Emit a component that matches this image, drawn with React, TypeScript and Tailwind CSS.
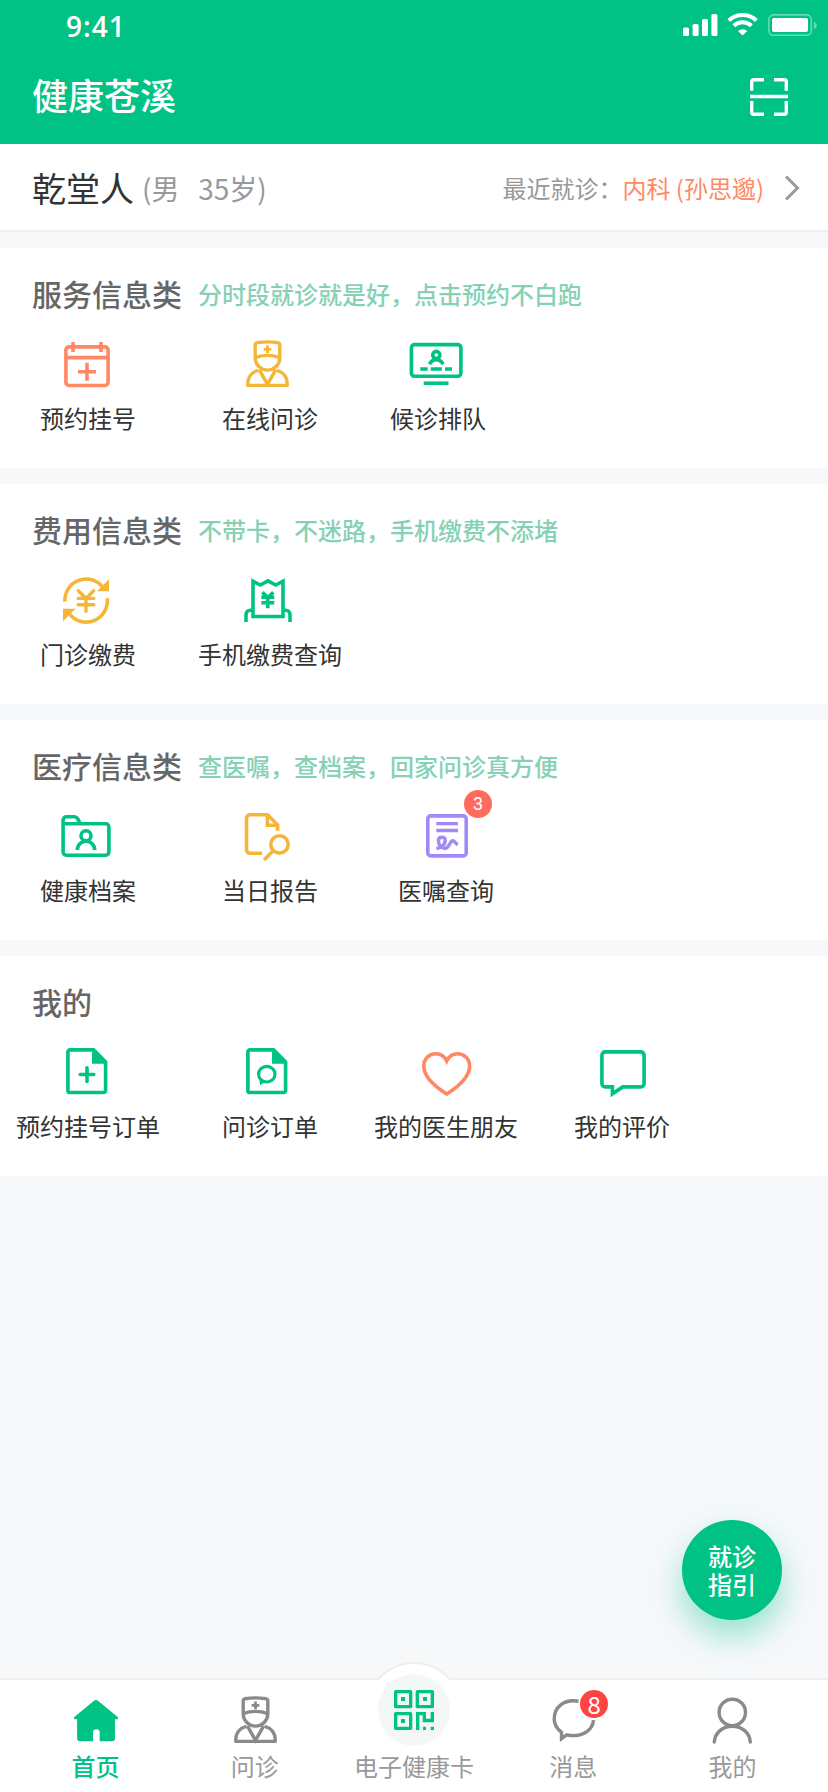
import type { ReactNode } from "react";

type IconProps = { className?: string };

type MenuItem = {
  label: string;
  icon: ReactNode;
  width: string;
  badge?: number;
};

type MenuSection = {
  title: string;
  hint?: string;
  items: MenuItem[];
};

function Icon({ className = "", width = 3.6, children }: IconProps & { width?: number; children: ReactNode }) {
  return (
    <svg
      viewBox="0 0 64 64"
      className={`w-16 h-16 shrink-0 ${className}`}
      fill="none"
      stroke="currentColor"
      strokeWidth={width}
    >
      {children}
    </svg>
  );
}

function CalendarIcon() {
  return (
    <Icon className="text-[#ff8864]">
      <rect x="9.9" y="13.9" width="42.2" height="38.6" rx="3.2" />
      <path d="M10 24.6h42M17 9v10M45 9v10M31 29.8v18M22 38.7h18" />
    </Icon>
  );
}

function DoctorIcon({ className = "" }: IconProps) {
  return (
    <Icon className={className} width={3.4}>
      <path d="M17.2 24.8V11.6q0-1.4 1.6-1.8 10.7-1.8 21.4 0 1.6.4 1.6 1.8v13.2a12.3 12.3 0 0 1-24.6 0Z" />
      <path d="M17.2 24.6q12.3-4.4 24.6 0" />
      <path d="M20.3 37.4C14 39 9.8 44 9.8 51v1.4h39.4V51c0-7-4.2-12-10.5-13.6" strokeLinejoin="round" />
      <path d="M21.3 36.8l8.2 14.6 8.2-14.6" />
      <path d="M29.5 12.6v7.6M25.7 16.4h7.6" strokeWidth="2.8" />
    </Icon>
  );
}

function QueueIcon() {
  return (
    <Icon className="text-[#00c285]">
      <rect x="5.4" y="11.6" width="49.5" height="31.7" rx="3.2" />
      <path d="M17.7 50.2h24.8" />
      <circle cx="30.3" cy="22" r="3.6" />
      <path d="M23.5 31.2c1.4-3 3.9-4.6 6.8-4.6s5.4 1.6 6.8 4.6M14.3 36h7.4M24.8 36h11M39 36h7" />
    </Icon>
  );
}

function PayIcon() {
  return (
    <Icon className="text-[#f5b638]">
      <path d="M8.9 32.7A21.2 21.2 0 0 1 46 17.3M51.2 29.3A21.2 21.2 0 0 1 14 45.6" />
      <path d="M53 10.3v12H41ZM7 39.7h12.7L7 52.3Z" fill="currentColor" stroke="none" />
      <path d="M22.3 21.8l7.7 7.6 7.7-7.6M30 29v13.3M22.2 29.4h15.6M22.2 35.7h15.6" strokeWidth="3.4" strokeLinecap="round" />
    </Icon>
  );
}

function ReceiptIcon() {
  return (
    <Icon className="text-[#00c285]">
      <path d="M15 47.5V12.2l7.3 3.8L30 11.8l7.7 4.2 7.3-3.8v35.3Z" />
      <path d="M15 41.2h-2.8a4.2 4.2 0 0 0-4.2 4.2V53M45 41.2h2.8a4.2 4.2 0 0 1 4.2 4.2V53" />
      <path d="M24.3 23.2l5.5 5.3 5.5-5.3M29.8 28v11.3M23.3 28.3h13M23.3 33.8h13" />
    </Icon>
  );
}

function FolderIcon() {
  return (
    <Icon className="text-[#00c285]">
      <path d="M7.1 19V15a3.3 3.3 0 0 1 3.3-3.3h8q2 0 3.1 1.8l3 5.3h25.2a3.2 3.2 0 0 1 3.2 3.2v25a3.2 3.2 0 0 1-3.2 3.2H10.3A3.2 3.2 0 0 1 7.1 47ZM7.1 18.8h18" />
      <circle cx="30" cy="30.7" r="5" />
      <path d="M21.3 45c0-5 3.8-8.8 8.7-8.8s8.7 3.8 8.7 8.8" />
    </Icon>
  );
}

function ReportIcon() {
  return (
    <Icon className="text-[#f5b638]">
      <path d="M24 48.2H12a3.5 3.5 0 0 1-3.5-3.5V13.2A3.5 3.5 0 0 1 12 9.7h17.6l10 10.2v5.8" />
      <path d="M29.4 10v10.3H40" />
      <circle cx="41.5" cy="39.4" r="8.7" />
      <path d="M35.5 45.5L26 55" />
    </Icon>
  );
}

function PrescriptionIcon() {
  return (
    <Icon className="text-[#a388f8]">
      <rect x="13.8" y="10.9" width="38.4" height="40" rx="2.8" />
      <path d="M22.3 18.6H44M22.3 25.5H44" strokeWidth="3.4" />
      <path d="M22.4 43.6c5.6-1.2 8.8-4.6 8.8-8.4 0-4-6.6-4-6.8.2-.2 4.2 3 8 6.6 8 4.6 0 4.6-7.6 7.8-7.6 1.6 0 2.4 2.4 4.9 4" strokeWidth="3.5" />
    </Icon>
  );
}

function OrderPlusIcon() {
  return (
    <Icon className="text-[#00c285]">
      <path d="M14 8.9h23.6l12 12V49.4a2.1 2.1 0 0 1-2.1 2.1H14a2.1 2.1 0 0 1-2.1-2.1V11A2.1 2.1 0 0 1 14 8.9Z" />
      <path d="M36 9v13.7h14Z" fill="currentColor" stroke="none" />
      <path d="M31 26.8v13.6M24.2 33.5h13.6" strokeLinecap="round" />
    </Icon>
  );
}

function OrderChatIcon() {
  return (
    <Icon className="text-[#00c285]">
      <path d="M12 8.9h23.6l12 12V49.4a2.1 2.1 0 0 1-2.1 2.1H12a2.1 2.1 0 0 1-2.1-2.1V11A2.1 2.1 0 0 1 12 8.9Z" />
      <path d="M34 9v13.7h14Z" fill="currentColor" stroke="none" />
      <ellipse cx="28.8" cy="33.2" rx="8.2" ry="7.8" strokeWidth="3.2" />
      <path d="M21.3 36.5l.7 7.7 5.5-3.4Z" fill="currentColor" stroke="none" />
    </Icon>
  );
}

function HeartIcon() {
  return (
    <Icon className="text-[#ff8864]">
      <path d="M32.7 53C21.5 45.8 9.8 35.4 9.8 25.2c0-7.2 5.2-12.4 12-12.4 4.7 0 8.6 2.6 10.9 7.2 2.3-4.6 6.2-7.2 10.9-7.2 6.8 0 12 5.2 12 12.4C55.6 35.4 43.9 45.8 32.7 53Z" />
    </Icon>
  );
}

function CommentIcon() {
  return (
    <Icon className="text-[#00c285]">
      <path d="M22.4 45.9H15.2a3.3 3.3 0 0 1-3.3-3.3V14.2a3.3 3.3 0 0 1 3.3-3.3h35.6a3.3 3.3 0 0 1 3.3 3.3v28.4a3.3 3.3 0 0 1-3.3 3.3H32.8L22.4 52.8Z" />
    </Icon>
  );
}

function HomeIcon() {
  return (
    <Icon className="text-[#00c285]">
      <path
        d="M29.7 11.9q2.3-1.7 4.6 0L53.6 28q1.3 1.9-.7 2.3H51v18.7a3.2 3.2 0 0 1-3.2 3.2H35.7V43.5a3.3 3.3 0 0 0-6.6 0v8.7H16.3a3.2 3.2 0 0 1-3.2-3.2V30.3h-2q-2-.4-.7-2.3Z"
        fill="currentColor"
        stroke="none"
      />
    </Icon>
  );
}

function QrIcon() {
  return (
    <svg viewBox="0 0 120 120" className="w-10 h-10 text-[#00c285]" fill="none" stroke="currentColor" strokeWidth="10">
      <path d="M5 5h45v45H5ZM70 5h45v45H70ZM5 71h45v44H5Z" strokeLinejoin="round" />
      <path d="M21 21h12v12H21ZM87 21h12v12H87ZM21 87h12v12H21ZM87 110h9v10h-9ZM110 110h10v10h-10Z" fill="currentColor" stroke="none" />
      <path d="M71 120V71h20v20.5h24V66" />
    </svg>
  );
}

function MessageIcon() {
  return (
    <Icon className="text-[#8a8a8a]" width={3.4}>
      <path d="M37.5 12.2C22.5 9.8 13.2 18.5 13.2 30c0 5.5 2.6 9.7 7.3 13.4v6.2l5.2-3.8C40.5 49 51.5 42 52.5 31.2" />
    </Icon>
  );
}

function UserIcon() {
  return (
    <Icon className="text-[#8a8a8a]" width={3.4}>
      <circle cx="32.3" cy="23.4" r="13.2" />
      <path d="M14.3 53C15 43.5 22.6 37.3 32.3 37.3S49.6 43.5 50.3 53" strokeLinecap="round" />
    </Icon>
  );
}

const sections: MenuSection[] = [
  {
    title: "服务信息类",
    hint: "分时段就诊就是好，点击预约不白跑",
    items: [
      { label: "预约挂号", icon: <CalendarIcon />, width: "w-[176px]" },
      { label: "在线问诊", icon: <DoctorIcon className="text-[#f5b638]" />, width: "w-[188px]" },
      { label: "候诊排队", icon: <QueueIcon />, width: "w-[148px]" },
    ],
  },
  {
    title: "费用信息类",
    hint: "不带卡，不迷路，手机缴费不添堵",
    items: [
      { label: "门诊缴费", icon: <PayIcon />, width: "w-[176px]" },
      { label: "手机缴费查询", icon: <ReceiptIcon />, width: "w-[188px]" },
    ],
  },
  {
    title: "医疗信息类",
    hint: "查医嘱，查档案，回家问诊真方便",
    items: [
      { label: "健康档案", icon: <FolderIcon />, width: "w-[176px]" },
      { label: "当日报告", icon: <ReportIcon />, width: "w-[188px]" },
      { label: "医嘱查询", icon: <PrescriptionIcon />, width: "w-[164px]", badge: 3 },
    ],
  },
  {
    title: "我的",
    items: [
      { label: "预约挂号订单", icon: <OrderPlusIcon />, width: "w-[176px]" },
      { label: "问诊订单", icon: <OrderChatIcon />, width: "w-[188px]" },
      { label: "我的医生朋友", icon: <HeartIcon />, width: "w-[164px]" },
      { label: "我的评价", icon: <CommentIcon />, width: "w-[188px]" },
    ],
  },
];

function StatusBar() {
  return (
    <div className="h-[50px] pl-[66px] pr-[10px] flex items-center justify-between">
      <span className="pt-0.5 text-[28px] leading-none font-semibold tracking-[1px] font-['Open_Sans',sans-serif]">9:41</span>
      <svg viewBox="0 0 136 24" className="w-[136px] h-6" fill="currentColor">
        <rect x="1" y="14.5" width="6" height="8.5" rx="1.5" />
        <rect x="10.6" y="11" width="6" height="12" rx="1.5" />
        <rect x="20" y="6" width="6" height="17" rx="1.5" />
        <rect x="29.4" y="1" width="6" height="22" rx="1.5" />
        <path d="M46.8 7.5a20 20 0 0 1 27.6 0M51.8 12.7a12.7 12.7 0 0 1 17.6 0" fill="none" stroke="currentColor" strokeWidth="4" />
        <path d="M56 18a7 7 0 0 1 9.2 0l-4.6 4.6Z" />
        <rect x="86.9" y="1.9" width="42.4" height="20.4" rx="4.5" fill="none" stroke="currentColor" strokeWidth="1.6" opacity=".4" />
        <rect x="90" y="5" width="36" height="14" rx="2" />
        <path d="M132 8.5q2.8 1 2.8 3.7t-2.8 3.7Z" opacity=".4" />
      </svg>
    </div>
  );
}

function Header() {
  return (
    <header className="h-36 bg-[#00c285] text-white">
      <StatusBar />
      <div className="h-[94px] pl-8 pr-10 flex items-center justify-between">
        <h1 className="pb-1.5 text-[36px] leading-none font-medium">健康苍溪</h1>
        <svg viewBox="0 0 38 38" className="w-[38px] h-[38px]" fill="none" stroke="currentColor" strokeWidth="3.4">
          <path d="M1.7 12.7V3.7a2 2 0 0 1 2-2H14M24 1.7h10.3a2 2 0 0 1 2 2v9M36.3 23v11.3a2 2 0 0 1-2 2H24M14 36.3H3.7a2 2 0 0 1-2-2V23M0 18.5h38" />
        </svg>
      </div>
    </header>
  );
}

function PatientBar() {
  return (
    <div className="h-[88px] pl-8 pr-[28px] bg-white border-b-2 border-[#f0f0f0] flex items-center">
      <span className="pt-0.5 text-[34px] leading-none text-[#333333]">乾堂人</span>
      <span className="ml-2 pt-0.5 text-[28px] leading-none text-[#999999] whitespace-pre">(男   35岁)</span>
      <span className="ml-auto pt-0.5 text-2xl leading-none text-[#999999]">最近就诊：</span>
      <span className="pt-0.5 text-2xl leading-none text-[#ff8964]">内科 (孙思邈)</span>
      <svg viewBox="0 0 16 26" className="ml-[20px] mt-0.5 w-4 h-[26px] text-[#999999]" fill="none" stroke="currentColor" strokeWidth="3">
        <path d="M2 1.5l11.5 11.5L2 24.5" />
      </svg>
    </div>
  );
}

function Section({ title, hint, items }: MenuSection) {
  return (
    <section className="h-[220px] pt-[17px] bg-white">
      <div className="h-[60px] pl-8 flex items-center">
        <h2 className="pb-1 text-[30px] leading-none font-medium text-[#666666]">{title}</h2>
        {hint && <p className="ml-4 pb-0.5 text-2xl leading-none font-medium text-[#86d1b5]">{hint}</p>}
      </div>
      <div className="mt-2 flex">
        {items.map((item) => (
          <div key={item.label} className={`flex flex-col items-center ${item.width}`}>
            <div className="relative">
              {item.icon}
              {item.badge && (
                <span className="absolute left-[50px] -top-[15px] w-7 h-7 rounded-full bg-[#ff6b5c] text-white text-lg leading-7 text-center font-[Roboto,sans-serif]">
                  {item.badge}
                </span>
              )}
            </div>
            <span className="mt-[5px] text-2xl leading-8 text-[#333333] whitespace-nowrap">{item.label}</span>
          </div>
        ))}
      </div>
    </section>
  );
}

function Tab({ label, active = false, children }: { label: string; active?: boolean; children: ReactNode }) {
  return (
    <div className="flex-1 pt-[9px] flex flex-col items-center">
      <div className="relative w-16 h-16 flex justify-center">{children}</div>
      <span className={`-mt-px text-2xl leading-7 whitespace-nowrap ${active ? "font-medium text-[#00c285]" : "text-[#999999]"}`}>
        {label}
      </span>
    </div>
  );
}

function TabBar() {
  return (
    <nav className="relative mt-auto h-[114px] px-4 bg-white border-t-2 border-[#eeeeee] flex">
      {/* Arc that rises above the bar behind the health card button */}
      <div className="absolute left-1/2 -top-[18px] -translate-x-1/2 w-24 h-[18px] overflow-hidden">
        <div className="w-24 h-24 rounded-full bg-white border-2 border-[#eeeeee]" />
      </div>
      <Tab label="首页" active>
        <HomeIcon />
      </Tab>
      <Tab label="问诊">
        <DoctorIcon className="text-[#8a8a8a] translate-x-[3px]" />
      </Tab>
      <Tab label="电子健康卡">
        <div className="-mt-[15px] w-[72px] h-[72px] shrink-0 rounded-full bg-[#f3f8f7] flex items-center justify-center">
          <QrIcon />
        </div>
      </Tab>
      <Tab label="消息">
        <MessageIcon />
        <span className="absolute left-[39px] top-[1px] w-7 h-7 rounded-full bg-[#ff4444] text-white text-2xl leading-7 text-center">
          8
        </span>
      </Tab>
      <Tab label="我的">
        <UserIcon />
      </Tab>
    </nav>
  );
}

export default function App() {
  return (
    <div className="relative w-full h-[1792px] flex flex-col overflow-hidden bg-[#f6f8fa] font-['Noto_Sans_CJK_SC',sans-serif]">
      <Header />
      <PatientBar />
      <main className="mt-4 flex flex-col gap-4">
        {sections.map((section) => (
          <Section key={section.title} {...section} />
        ))}
      </main>
      <button className="absolute right-[46px] top-[1520px] w-[100px] h-[100px] rounded-full bg-[#00c285] text-white text-2xl leading-7 font-medium shadow-[0_16px_32px_rgba(0,194,133,0.4)]">
        就诊
        <br />
        指引
      </button>
      <TabBar />
    </div>
  );
}
